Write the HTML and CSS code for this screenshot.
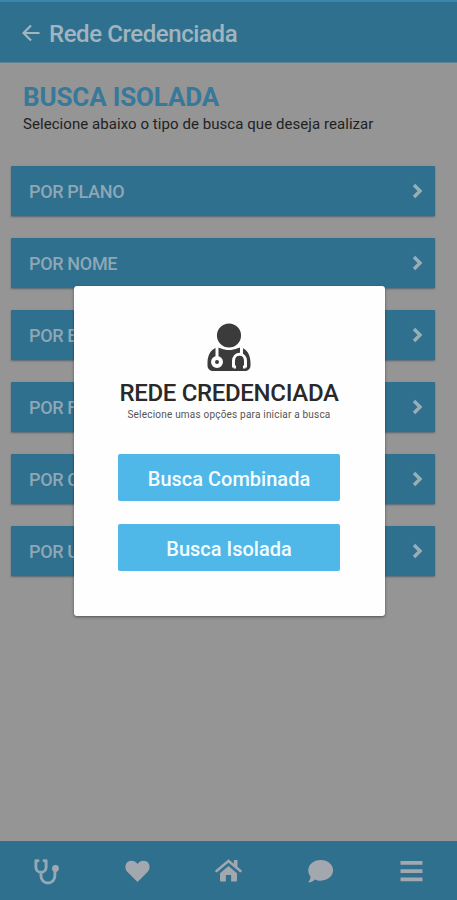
FILE: index.html
```html
<!DOCTYPE html>
<html lang="pt-BR">
<head>
<meta charset="utf-8">
<title>Rede Credenciada</title>
<link rel="stylesheet" href="styles.css">
</head>
<body>
<div class="app">
  <header class="topbar">
    <svg class="back" viewBox="0 0 18 18"><path d="M17.5 9H2M9 1.5L1.5 9L9 16.5"/></svg>
    <span class="topbar-title">Rede Credenciada</span>
  </header>
  <main class="content">
    <h1 class="title">BUSCA ISOLADA</h1>
    <p class="lead">Selecione abaixo o tipo de busca que deseja realizar</p>
    <nav class="options">
      <a class="option"><span>POR PLANO</span><svg class="chevron" viewBox="0 0 10 16"><path d="M2 2L8 8L2 14"/></svg></a>
      <a class="option"><span>POR NOME</span><svg class="chevron" viewBox="0 0 10 16"><path d="M2 2L8 8L2 14"/></svg></a>
      <a class="option"><span>POR E</span><svg class="chevron" viewBox="0 0 10 16"><path d="M2 2L8 8L2 14"/></svg></a>
      <a class="option"><span>POR F</span><svg class="chevron" viewBox="0 0 10 16"><path d="M2 2L8 8L2 14"/></svg></a>
      <a class="option"><span>POR C</span><svg class="chevron" viewBox="0 0 10 16"><path d="M2 2L8 8L2 14"/></svg></a>
      <a class="option"><span>POR U</span><svg class="chevron" viewBox="0 0 10 16"><path d="M2 2L8 8L2 14"/></svg></a>
    </nav>
  </main>
  <footer class="tabs">
    <svg class="tab" viewBox="0 0 28 28"><path class="line" d="M5.200 2.800H3V9.500a5.300 5.300 0 0 0 10.600 0V2.800H11.400M8.300 15V18.700a7.200 7.200 0 0 0 14.400 0V14"/><circle cx="23.300" cy="10.800" r="3.500"/></svg>
    <svg class="tab" viewBox="0 0 28 28"><path d="M14 25L3.600 14.600C0.300 11.100 1 5.700 4.500 3.700C7.700 1.900 11.400 2.800 14 6.100C16.600 2.800 20.300 1.900 23.500 3.700C27 5.700 27.700 11.100 24.400 14.600Z"/></svg>
    <svg class="tab tab-home" viewBox="0 0 28 28"><path d="M14 8.300L22.800 15.800V23.300a1 1 0 0 1-1 1H16.700V17.500H11.300V24.300H6.200a1 1 0 0 1-1-1V15.800Z"/><path class="roof" d="M1.600 14.600L14 4L26.400 14.600"/><path class="roof-line" d="M1.600 13.400L14 3.100L26.400 13.400"/><path d="M19.600 2.200H23.300V10.500L19.600 7.400Z"/></svg>
    <svg class="tab" viewBox="0 0 28 28"><path d="M14.200 2C21.400 2 27.100 6.800 27.100 12.800C27.100 18.700 21.400 23.500 14.200 23.500C11.900 23.500 9.900 23 8.100 22.200C6.400 24 3.900 25.300 1.200 25.300C2.600 23.600 3.600 21.500 3.700 19.500C2.200 17.600 1.300 15.300 1.300 12.800C1.300 6.800 7 2 14.200 2Z"/></svg>
    <svg class="tab" viewBox="0 0 28 28"><path d="M2.600 3.200H25.400V7H2.600ZM2.600 11.700H25.400V15.500H2.600ZM2.600 20.200H25.400V24H2.600Z"/></svg>
  </footer>
  <section class="modal">
    <svg class="doctor" viewBox="0 0 44 49">
      <path d="M10 24.500C13 24.500 15.500 27 22 27C28.500 27 31 24.500 34 24.500C40 26 43.500 32 43.500 40V42.500C43.500 46 41 48 37.500 48H6.500C3 48 .5 46 .5 42.500V40C.5 32 4 26 10 24.500Z"/>
      <circle class="head" cx="22" cy="12.500" r="12.800"/>
      <path class="tube" d="M10 23V35M34.500 23V31M26.500 44.500V38C26.500 29 38.500 29 38.500 38V44.500M26.500 44H29M36 44H38.500"/>
      <circle class="bell" cx="10" cy="39" r="4"/>
    </svg>
    <h2 class="modal-title">REDE CREDENCIADA</h2>
    <p class="modal-text">Selecione umas opções para iniciar a busca</p>
    <button class="action">Busca Combinada</button>
    <button class="action">Busca Isolada</button>
  </section>
</div>
</body>
</html>
```
FILE: styles.css
```css
* { box-sizing: border-box; }
body { margin: 0; font-family: Roboto, "Liberation Sans", sans-serif; }
h1, h2, p { margin: 0; white-space: nowrap; }
.app {
  position: relative;
  display: flex;
  flex-direction: column;
  width: 457px;
  height: 900px;
  overflow: hidden;
  background: #959595;
}
.topbar {
  display: flex;
  align-items: center;
  gap: 9px;
  height: 63px;
  padding: 4px 0 0 22px;
  border-top: 2px solid #3c84af;
  border-bottom: 1px solid #5d8293;
  background: #30708f;
  color: #a2b5be;
}
.back { width: 18px; height: 18px; margin-top: -2px; fill: none; stroke: #a2b5be; stroke-width: 2.2; }
.topbar-title { font-size: 24px; font-weight: 500; letter-spacing: -.42px; }
.content { flex: 1; padding: 18px 22px 0 11px; }
.title { padding-left: 12px; font-size: 26px; line-height: 32px; font-weight: 700; letter-spacing: -.15px; color: #36799a; }
.lead { padding-left: 12px; font-size: 15px; line-height: 22px; letter-spacing: .06px; color: #222; }
.options { display: flex; flex-direction: column; gap: 22px; margin-top: 31px; }
.option {
  display: flex;
  align-items: center;
  justify-content: space-between;
  height: 50px;
  padding: 1px 13px 0 18px;
  border-radius: 1px;
  background: #30708f;
  box-shadow: 0 1px 2px rgba(45, 75, 90, .6);
  color: #8da8b5;
  font-size: 18px;
  font-weight: 500;
  letter-spacing: -.33px;
}
.chevron { width: 10px; height: 16px; margin-top: -2px; fill: none; stroke: #98adb8; stroke-width: 3.4; }
.tabs {
  display: flex;
  align-items: center;
  justify-content: space-around;
  height: 59px;
  padding: 2px 0 0 1px;
  background: #30708f;
}
.tab { width: 27px; height: 27px; fill: #a3a7ae; }
.line { fill: none; stroke: #94a9b6; stroke-width: 3; stroke-linecap: round; stroke-linejoin: round; }
.roof { fill: none; stroke: #30708f; stroke-width: 5; }
.roof-line { fill: none; stroke: #a3a7ae; stroke-width: 2.6; stroke-linecap: round; }
.modal {
  position: absolute;
  left: 74px;
  top: 286px;
  display: flex;
  flex-direction: column;
  align-items: center;
  width: 311px;
  height: 330px;
  padding: 37px 1px 0 0;
  border-radius: 3px;
  background: #fefefe;
  box-shadow: 0 1px 3px rgba(0, 0, 0, .45);
}
.doctor { width: 44px; height: 49px; fill: #3b3b3b; }
.head { stroke: #fefefe; stroke-width: 1.500; }
.tube { fill: none; stroke: #fefefe; stroke-width: 3; }
.bell { fill: #3b3b3b; stroke: #fefefe; stroke-width: 4; }
.modal-title { margin-top: 6px; font-size: 24px; line-height: 30px; font-weight: 500; letter-spacing: -.32px; color: #292929; }
.modal-text { margin-top: 0; font-size: 10px; line-height: 13px; letter-spacing: .2px; color: #555; }
.action {
  flex: none;
  width: 222px;
  height: 47px;
  margin: 33px 0 0;
  padding: 3px 0 0;
  border: 0;
  border-radius: 2px;
  background: #50b7e9;
  color: #f4fcff;
  font: 500 20px Roboto, "Liberation Sans", sans-serif;
}
.action + .action { margin-top: 23px; padding-top: 2px; }
```
